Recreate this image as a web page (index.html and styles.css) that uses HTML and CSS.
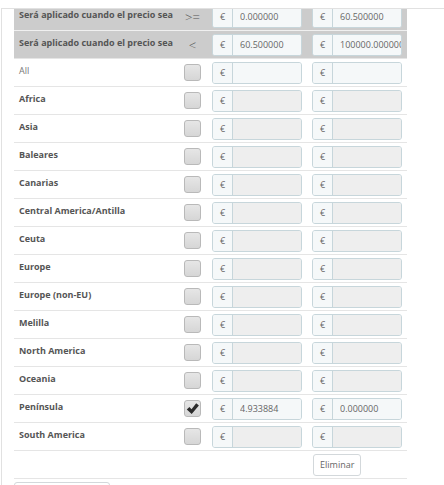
FILE: index.html
```html
<!DOCTYPE html>
<html lang="es">
<head>
<meta charset="utf-8">
<title>Rangos</title>
<link rel="stylesheet" href="styles.css">
</head>
<body>
<div class="panel">
  <div class="clip">
    <div class="table">
      <div class="row head">
        <div class="label">Será aplicado cuando el precio sea</div>
        <div class="op">&gt;=</div>
        <div class="price"><div class="ig"><span class="addon">€</span><input class="field" type="text" value="0.000000" readonly></div></div>
        <div class="price"><div class="ig"><span class="addon">€</span><input class="field" type="text" value="60.500000" readonly></div></div>
      </div>
      <div class="row head">
        <div class="label">Será aplicado cuando el precio sea</div>
        <div class="op">&lt;</div>
        <div class="price"><div class="ig"><span class="addon">€</span><input class="field" type="text" value="60.500000" readonly></div></div>
        <div class="price"><div class="ig"><span class="addon">€</span><input class="field" type="text" value="100000.000000" readonly></div></div>
      </div>
      <div class="row">
        <div class="label all">All</div>
        <div class="check"><span class="cb"></span></div>
        <div class="price"><div class="ig"><span class="addon">€</span><input class="field" type="text" value="" readonly></div></div>
        <div class="price"><div class="ig"><span class="addon">€</span><input class="field" type="text" value="" readonly></div></div>
      </div>
      <div class="row">
        <div class="label">Africa</div>
        <div class="check"><span class="cb"></span></div>
        <div class="price"><div class="ig off"><span class="addon">€</span><input class="field" type="text" value="" disabled></div></div>
        <div class="price"><div class="ig off"><span class="addon">€</span><input class="field" type="text" value="" disabled></div></div>
      </div>
      <div class="row">
        <div class="label">Asia</div>
        <div class="check"><span class="cb"></span></div>
        <div class="price"><div class="ig off"><span class="addon">€</span><input class="field" type="text" value="" disabled></div></div>
        <div class="price"><div class="ig off"><span class="addon">€</span><input class="field" type="text" value="" disabled></div></div>
      </div>
      <div class="row">
        <div class="label">Baleares</div>
        <div class="check"><span class="cb"></span></div>
        <div class="price"><div class="ig off"><span class="addon">€</span><input class="field" type="text" value="" disabled></div></div>
        <div class="price"><div class="ig off"><span class="addon">€</span><input class="field" type="text" value="" disabled></div></div>
      </div>
      <div class="row">
        <div class="label">Canarias</div>
        <div class="check"><span class="cb"></span></div>
        <div class="price"><div class="ig off"><span class="addon">€</span><input class="field" type="text" value="" disabled></div></div>
        <div class="price"><div class="ig off"><span class="addon">€</span><input class="field" type="text" value="" disabled></div></div>
      </div>
      <div class="row">
        <div class="label">Central America/Antilla</div>
        <div class="check"><span class="cb"></span></div>
        <div class="price"><div class="ig off"><span class="addon">€</span><input class="field" type="text" value="" disabled></div></div>
        <div class="price"><div class="ig off"><span class="addon">€</span><input class="field" type="text" value="" disabled></div></div>
      </div>
      <div class="row">
        <div class="label">Ceuta</div>
        <div class="check"><span class="cb"></span></div>
        <div class="price"><div class="ig off"><span class="addon">€</span><input class="field" type="text" value="" disabled></div></div>
        <div class="price"><div class="ig off"><span class="addon">€</span><input class="field" type="text" value="" disabled></div></div>
      </div>
      <div class="row">
        <div class="label">Europe</div>
        <div class="check"><span class="cb"></span></div>
        <div class="price"><div class="ig off"><span class="addon">€</span><input class="field" type="text" value="" disabled></div></div>
        <div class="price"><div class="ig off"><span class="addon">€</span><input class="field" type="text" value="" disabled></div></div>
      </div>
      <div class="row">
        <div class="label">Europe (non-EU)</div>
        <div class="check"><span class="cb"></span></div>
        <div class="price"><div class="ig off"><span class="addon">€</span><input class="field" type="text" value="" disabled></div></div>
        <div class="price"><div class="ig off"><span class="addon">€</span><input class="field" type="text" value="" disabled></div></div>
      </div>
      <div class="row">
        <div class="label">Melilla</div>
        <div class="check"><span class="cb"></span></div>
        <div class="price"><div class="ig off"><span class="addon">€</span><input class="field" type="text" value="" disabled></div></div>
        <div class="price"><div class="ig off"><span class="addon">€</span><input class="field" type="text" value="" disabled></div></div>
      </div>
      <div class="row">
        <div class="label">North America</div>
        <div class="check"><span class="cb"></span></div>
        <div class="price"><div class="ig off"><span class="addon">€</span><input class="field" type="text" value="" disabled></div></div>
        <div class="price"><div class="ig off"><span class="addon">€</span><input class="field" type="text" value="" disabled></div></div>
      </div>
      <div class="row">
        <div class="label">Oceania</div>
        <div class="check"><span class="cb"></span></div>
        <div class="price"><div class="ig off"><span class="addon">€</span><input class="field" type="text" value="" disabled></div></div>
        <div class="price"><div class="ig off"><span class="addon">€</span><input class="field" type="text" value="" disabled></div></div>
      </div>
      <div class="row">
        <div class="label">Península</div>
        <div class="check"><span class="cb"><svg class="tick" viewBox="0 0 17 17" width="17" height="17"><path d="M2.8 9.4 L5.4 6.9 L7.5 9.2 L12.2 3.2 L14.9 5.4 L7.7 14 Z" fill="#2b2b2b"/></svg></span></div>
        <div class="price"><div class="ig"><span class="addon">€</span><input class="field" type="text" value="4.933884" readonly></div></div>
        <div class="price"><div class="ig"><span class="addon">€</span><input class="field" type="text" value="0.000000" readonly></div></div>
      </div>
      <div class="row">
        <div class="label">South America</div>
        <div class="check"><span class="cb"></span></div>
        <div class="price"><div class="ig off"><span class="addon">€</span><input class="field" type="text" value="" disabled></div></div>
        <div class="price"><div class="ig off"><span class="addon">€</span><input class="field" type="text" value="" disabled></div></div>
      </div>
      <div class="row last">
        <div class="label"></div>
        <div class="check"></div>
        <div class="price"></div>
        <div class="price"><button class="btn" type="button">Eliminar</button></div>
      </div>
    </div>
    <div class="add-box" aria-hidden="true"></div>
  </div>
</div>
</body>
</html>
```

FILE: styles.css
```css
html, body {
  margin: 0;
  padding: 0;
  background: #fff;
  overflow: hidden;
}

body {
  font-family: "Open Sans", "Liberation Sans", sans-serif;
  color: #555;
}

.panel {
  margin: 8px 0 0 1px;
  border-top: 1px solid #e1e1e1;
  border-left: 1px solid #e1e1e1;
  padding-left: 12px;
  min-height: 600px;
}

.clip {
  width: 393px;
  overflow: hidden;
}

.table {
  margin-top: -7px;
  border-bottom: 1px solid #e5e5e5;
}

.row {
  display: grid;
  grid-template-columns: 165px 27px 100px 101px;
  height: 28px;
  box-sizing: border-box;
  border-top: 1px solid #e5e5e5;
}

.row.head {
  background: #cccccc;
  border-top-color: #f0f0f0;
}

.label {
  padding: 5px 0 0 5px;
  font-size: 9px;
  line-height: 13px;
  font-weight: 700;
  color: #555;
  white-space: nowrap;
}

.label.all {
  font-weight: 400;
  color: #777;
}

.op {
  display: flex;
  align-items: center;
  justify-content: center;
  font-size: 13px;
  font-weight: 300;
  color: #555;
}

.check {
  display: flex;
  align-items: center;
  justify-content: center;
}

.cb {
  display: block;
  width: 17px;
  height: 17px;
  box-sizing: border-box;
  border: 1px solid #b9b9b9;
  border-radius: 3px;
  background: linear-gradient(#e6e6e6, #d6d6d6);
  position: relative;
}

.tick {
  position: absolute;
  left: -1px;
  top: -1px;
}

.price {
  display: flex;
  align-items: center;
  padding-left: 6px;
}

.ig {
  display: flex;
  width: 90px;
  height: 22px;
  box-sizing: border-box;
  border: 1px solid #c7d6db;
  border-radius: 3px;
  overflow: hidden;
  background: #f5f8f9;
}

.addon {
  flex: 0 0 19px;
  display: flex;
  align-items: center;
  justify-content: center;
  border-right: 1px solid #c7d6db;
  background: #f5f8f9;
  font-size: 9px;
  color: #666;
}

.field {
  flex: 1 1 auto;
  min-width: 0;
  width: 0;
  border: 0;
  margin: 0;
  padding: 0 0 0 7px;
  background: #f5f8f9;
  font-family: "Open Sans", "Liberation Sans", sans-serif;
  font-size: 9px;
  color: #666;
  outline: none;
}

.ig.off .field {
  background: #eeeeee;
}

.btn {
  height: 22px;
  box-sizing: border-box;
  padding: 0 6px;
  margin-left: 1px;
  border: 1px solid #d3d8db;
  border-radius: 3px;
  background: #fff;
  font-family: "Open Sans", "Liberation Sans", sans-serif;
  font-size: 9px;
  color: #666;
}

.add-box {
  width: 96px;
  height: 24px;
  box-sizing: border-box;
  margin-top: 3px;
  border: 1px solid #d3d8db;
  border-radius: 3px;
  background: #fff;
}
```
